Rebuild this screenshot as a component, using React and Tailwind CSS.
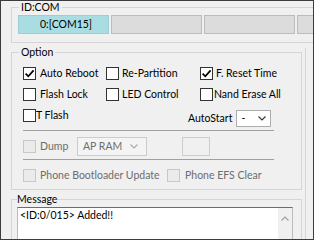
import React from "react";

function Check({ checked, disabled }) {
  return (
    <span
      className={`flex h-[13px] w-[13px] shrink-0 items-center justify-center border ${
        disabled ? "border-[#c8c8c8] bg-[#ebebeb]" : "border-[#333333] bg-white"
      }`}
    >
      {checked && (
        <svg width="11" height="11" viewBox="0 0 11 11">
          <path d="M1.6 5.6 L4.3 8.3 L9.6 2.4" fill="none" stroke="#000" strokeWidth="1.7" />
        </svg>
      )}
    </span>
  );
}

function Chevron({ color }) {
  return (
    <svg width="8" height="5" viewBox="0 0 8 5">
      <path d="M0.5 0.5 L4 4 L7.5 0.5" fill="none" stroke={color} strokeWidth="1.1" />
    </svg>
  );
}

function Option({ label, checked, disabled, gap = "ml-[4px]" }) {
  return (
    <div className="flex items-center">
      <Check checked={checked} disabled={disabled} />
      <span className={`${gap} ${disabled ? "text-[#6d6d6d]" : "text-black"}`}>{label}</span>
    </div>
  );
}

export default function App() {
  return (
    <div className="flex h-[240px] w-[314px] overflow-hidden border border-[#3c3c3c] bg-[#f0f0f0] font-['Lato',sans-serif] text-[10.5px] leading-[13px] text-black">
      <div className="ml-[10px] flex w-[291px] shrink-0 flex-col">
        {/* ID:COM */}
        <fieldset className="w-[320px] min-w-0 border border-[#d5d5d5] pb-[8px] pl-[6px] pt-[1px]">
          <legend className="ml-[1px] px-[2px] leading-[13px]">ID:COM</legend>
          <div className="flex gap-[2px]">
            <div className="h-[19px] w-[91px] shrink-0 border border-[#9ccfd4] bg-[#a9dde2] pl-[21px] leading-[17px]">
              0:[COM15]
            </div>
            <div className="h-[19px] w-[91px] shrink-0 border border-[#bcbcbc] bg-[#dcdcdc]" />
            <div className="h-[19px] w-[91px] shrink-0 border border-[#bcbcbc] bg-[#dcdcdc]" />
            <div className="h-[19px] w-[91px] shrink-0 border border-[#bcbcbc] bg-[#dcdcdc]" />
          </div>
        </fieldset>

        {/* Option */}
        <fieldset className="mt-[3px] min-w-0 border border-[#d5d5d5] pb-[4px] pl-[6px] pt-[4px]">
          <legend className="ml-[1px] px-[2px] leading-[13px]">Option</legend>
          <div className="ml-[5px] grid h-[21px] grid-cols-[83px_94px_auto] items-center">
            <Option label="Auto Reboot" checked />
            <Option label="Re-Partition" gap="ml-[3px]" />
            <Option label="F. Reset Time" checked gap="ml-[3px]" />
          </div>
          <div className="ml-[5px] grid h-[21px] grid-cols-[83px_94px_auto] items-center">
            <Option label="Flash Lock" />
            <Option label="LED Control" gap="ml-[3px]" />
            <Option label="Nand Erase All" gap="ml-[1px]" />
          </div>
          <div className="ml-[5px] flex h-[21px] items-center">
            <div className="w-[165px]">
              <Option label="T Flash" gap="ml-0" />
            </div>
            <div className="mt-[5px] flex items-center">
              <span>AutoStart</span>
              <div className="ml-[4px] flex h-[17px] w-[35px] items-center justify-between border border-[#adadad] bg-white pl-[4px] pr-[4px]">
                <span>-</span>
                <Chevron color="#333333" />
              </div>
            </div>
          </div>

          <div className="ml-[5px] mt-[4px] h-px w-[251px] bg-[#a0a0a0]" />

          <div className="ml-[5px] mt-[6px] flex h-[19px] items-center">
            <div className="w-[54px]">
              <Option label="Dump" disabled />
            </div>
            <div className="flex h-[19px] w-[70px] items-center justify-between border border-[#cccccc] bg-[#f4f4f4] pl-[5px] pr-[8px] text-[#6d6d6d]">
              <span>AP RAM</span>
              <Chevron color="#a8a8a8" />
            </div>
            <div className="ml-[35px] h-[19px] w-[28px] border border-[#cccccc] bg-[#f0f0f0]" />
          </div>

          <div className="ml-[5px] mt-[3px] h-px w-[251px] bg-[#a0a0a0]" />

          <div className="ml-[5px] mt-[5px] flex h-[20px] items-center">
            <div className="w-[144px]">
              <Option label="Phone Bootloader Update" disabled />
            </div>
            <Option label="Phone EFS Clear" disabled gap="ml-[5px]" />
          </div>
        </fieldset>

        {/* Message */}
        <fieldset className="mt-[3px] min-w-0 border border-[#d5d5d5] pl-[5px] pt-[1px]">
          <legend className="leading-[13px]">Message</legend>
          <div className="flex h-[40px] w-[276px] border border-[#bcbcbc] border-t-[#6d6d6d] bg-white">
            <div className="flex-1 pl-[2px] pt-[1px]">&lt;ID:0/015&gt; Added!!</div>
            <div className="flex w-[14px] justify-center bg-[#f0f0f0] pt-[8px]">
              <svg width="8" height="5" viewBox="0 0 8 5">
                <path d="M0.5 4.5 L4 1 L7.5 4.5" fill="none" stroke="#a0a0a0" strokeWidth="1.1" />
              </svg>
            </div>
          </div>
        </fieldset>
      </div>
      <div className="w-[3px] shrink-0" />
      <div className="mt-[47px] flex-1 border-l border-[#d5d5d5]" />
    </div>
  );
}
